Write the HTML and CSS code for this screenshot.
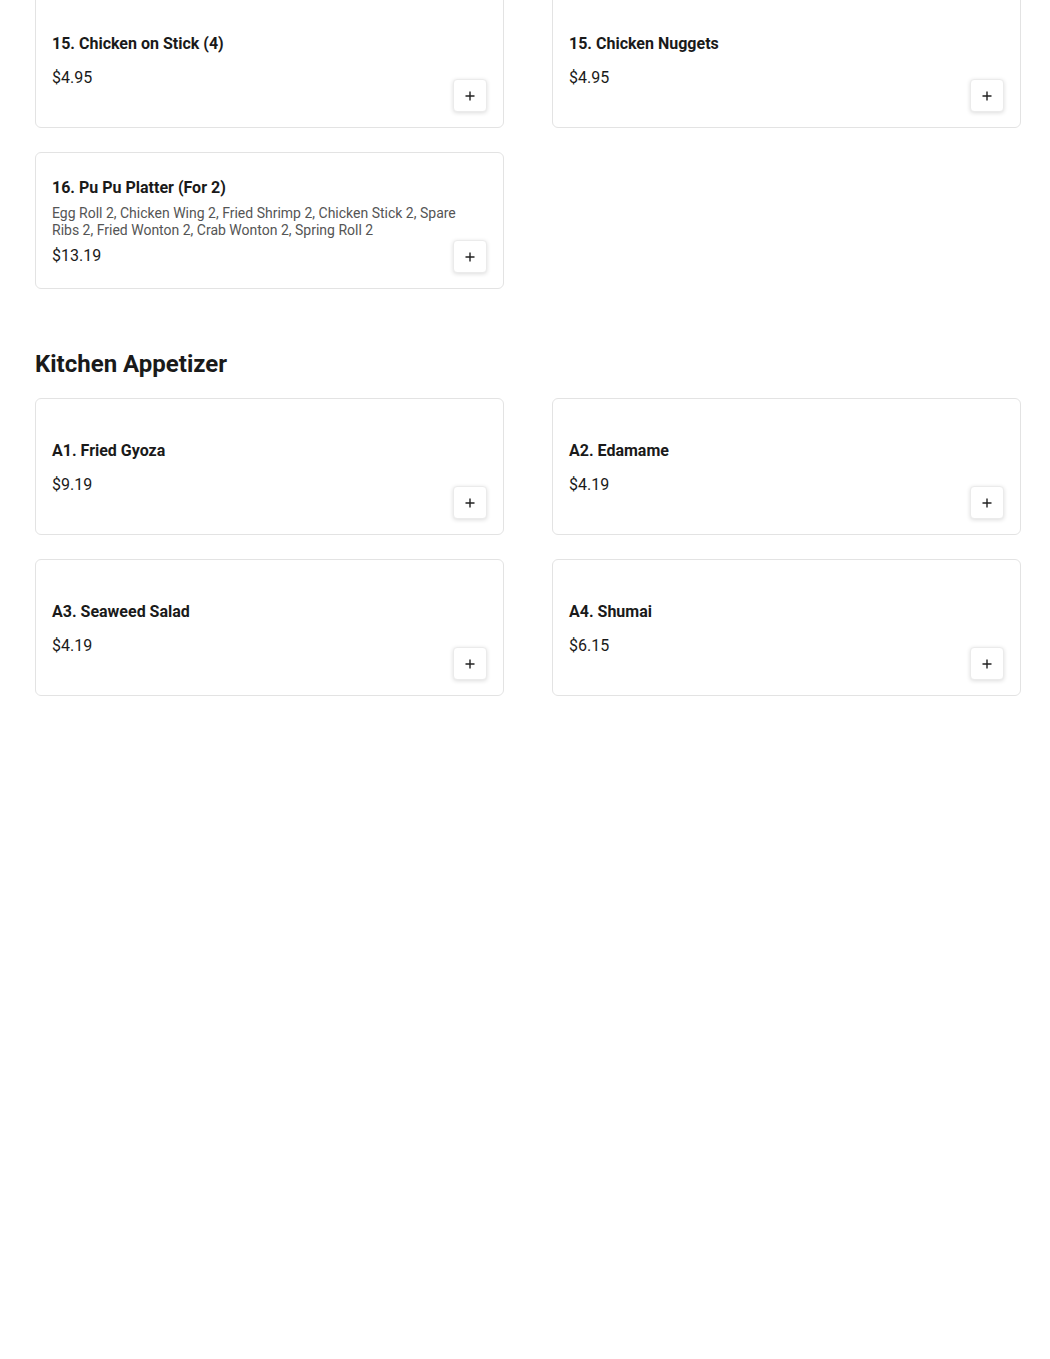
FILE: index.html
```html
<!DOCTYPE html>
<html lang="en">
<head>
<meta charset="utf-8">
<title>Menu</title>
<link rel="stylesheet" href="styles.css">
</head>
<body>
<main class="menu">
  <section class="section section-first">
    <div class="grid">
      <div class="card">
        <div class="info">
          <div class="title">15. Chicken on Stick (4)</div>
          <div class="desc"></div>
          <div class="price">$4.95</div>
        </div>
        <button class="add" aria-label="Add"><svg viewBox="0 0 12 12" width="12" height="12"><path d="M6 1.5v9M1.5 6h9" stroke="#222" stroke-width="1.4" fill="none"/></svg></button>
      </div>
      <div class="card">
        <div class="info">
          <div class="title">15. Chicken Nuggets</div>
          <div class="desc"></div>
          <div class="price">$4.95</div>
        </div>
        <button class="add" aria-label="Add"><svg viewBox="0 0 12 12" width="12" height="12"><path d="M6 1.5v9M1.5 6h9" stroke="#222" stroke-width="1.4" fill="none"/></svg></button>
      </div>
      <div class="card">
        <div class="info">
          <div class="title">16. Pu Pu Platter (For 2)</div>
          <div class="desc">Egg Roll 2, Chicken Wing 2, Fried Shrimp 2, Chicken Stick 2, Spare Ribs 2, Fried Wonton 2, Crab Wonton 2, Spring Roll 2</div>
          <div class="price">$13.19</div>
        </div>
        <button class="add" aria-label="Add"><svg viewBox="0 0 12 12" width="12" height="12"><path d="M6 1.5v9M1.5 6h9" stroke="#222" stroke-width="1.4" fill="none"/></svg></button>
      </div>
    </div>
  </section>
  <section class="section">
    <h2 class="heading">Kitchen Appetizer</h2>
    <div class="grid">
      <div class="card">
        <div class="info">
          <div class="title">A1. Fried Gyoza</div>
          <div class="desc"></div>
          <div class="price">$9.19</div>
        </div>
        <button class="add" aria-label="Add"><svg viewBox="0 0 12 12" width="12" height="12"><path d="M6 1.5v9M1.5 6h9" stroke="#222" stroke-width="1.4" fill="none"/></svg></button>
      </div>
      <div class="card">
        <div class="info">
          <div class="title">A2. Edamame</div>
          <div class="desc"></div>
          <div class="price">$4.19</div>
        </div>
        <button class="add" aria-label="Add"><svg viewBox="0 0 12 12" width="12" height="12"><path d="M6 1.5v9M1.5 6h9" stroke="#222" stroke-width="1.4" fill="none"/></svg></button>
      </div>
      <div class="card">
        <div class="info">
          <div class="title">A3. Seaweed Salad</div>
          <div class="desc"></div>
          <div class="price">$4.19</div>
        </div>
        <button class="add" aria-label="Add"><svg viewBox="0 0 12 12" width="12" height="12"><path d="M6 1.5v9M1.5 6h9" stroke="#222" stroke-width="1.4" fill="none"/></svg></button>
      </div>
      <div class="card">
        <div class="info">
          <div class="title">A4. Shumai</div>
          <div class="desc"></div>
          <div class="price">$6.15</div>
        </div>
        <button class="add" aria-label="Add"><svg viewBox="0 0 12 12" width="12" height="12"><path d="M6 1.5v9M1.5 6h9" stroke="#222" stroke-width="1.4" fill="none"/></svg></button>
      </div>
    </div>
  </section>
</main>
</body>
</html>
```

FILE: styles.css
```css
* { box-sizing: border-box; }
html, body { margin: 0; padding: 0; background: #fff; }
body {
  font-family: Roboto, "Liberation Sans", Arial, sans-serif;
  color: #1a1a1a;
}
.menu {
  width: 986px;
  margin-left: 35px;
}
.section-first { margin-top: -9px; }
.heading {
  font-size: 24px;
  line-height: 32px;
  font-weight: 700;
  margin: 59px 0 18px;
  color: #1a1a1a;
}
.grid {
  display: grid;
  grid-template-columns: 1fr 1fr;
  column-gap: 48px;
  row-gap: 24px;
}
.card {
  position: relative;
  display: flex;
  align-items: center;
  min-height: 137px;
  padding: 18px 16px 16px;
  border: 1px solid #e3e3e3;
  border-radius: 6px;
  background: #fff;
}
.info {
  flex: 1;
  display: flex;
  flex-direction: column;
  gap: 7px;
  padding-right: 20px;
}
.title {
  font-size: 16px;
  line-height: 20px;
  font-weight: 700;
}
.desc {
  font-size: 14px;
  line-height: 17px;
  color: #555;
}
.price {
  font-size: 16px;
  line-height: 20px;
  color: #1a1a1a;
}
.add {
  position: absolute;
  right: 16px;
  bottom: 15px;
  width: 34px;
  height: 33px;
  padding: 0;
  display: flex;
  align-items: center;
  justify-content: center;
  background: #fff;
  border: 1px solid #ebebeb;
  border-radius: 4px;
  box-shadow: 0 1px 4px rgba(0, 0, 0, 0.14);
  cursor: pointer;
}
.add svg { display: block; }
```
